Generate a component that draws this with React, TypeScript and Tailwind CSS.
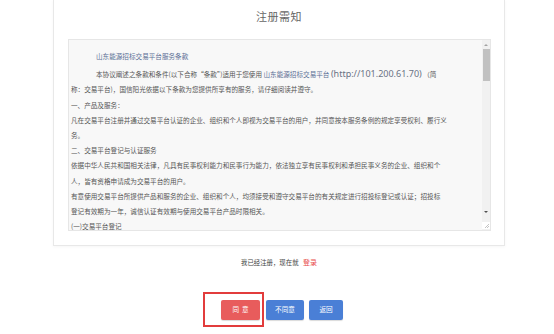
const cjk = { fontFamily: '"Microsoft YaHei", "Noto Sans CJK SC", "Noto Sans", sans-serif' };

const lines: { text: React.ReactNode; indent?: boolean }[] = [
    {
        indent: true,
        text: (
            <>
                本协议阐述之条款和条件(以下合称“条款”)适用于您使用{' '}
                <span className="text-[#5b6f95]">山东能源招标交易平台</span>{' '}
                <span className="text-[9px] text-[#6a7284]" style={{ fontFamily: '"Noto Sans", sans-serif' }}>
                    (http://101.200.61.70)
                </span>{' '}
                （简
            </>
        ),
    },
    { text: '称：交易平台)，国信阳光依据以下条款为您提供所享有的服务，请仔细阅读并遵守。' },
    { text: '一、产品及服务：' },
    { text: '凡在交易平台注册并通过交易平台认证的企业、组织和个人即视为交易平台的用户，并同意按本服务条例的规定享受权利、履行义' },
    { text: '务。' },
    { text: '二、交易平台登记与认证服务' },
    { text: '依据中华人民共和国相关法律，凡具有民事权利能力和民事行为能力，依法独立享有民事权利和承担民事义务的企业、组织和个' },
    { text: '人，皆有资格申请成为交易平台的用户。' },
    { text: '有意使用交易平台所提供产品和服务的企业、组织和个人，均须接受和遵守交易平台的有关规定进行招投标登记或认证；招投标' },
    { text: '登记有效期为一年，诚信认证有效期与使用交易平台产品时限相关。' },
    { text: '(一)交易平台登记' },
];

export default function App() {
    return (
        <div className="min-h-[334px] w-[554px] bg-white overflow-hidden" style={cjk}>
            <div className="ml-[53px] w-[452px] border-x border-b border-[#e8e8e8] bg-white px-[14px] pt-[8px] pb-[14px] shadow-[0_1px_3px_rgba(0,0,0,0.04)]">
                <h1 className="h-[16px] text-center text-[11px] leading-[16px] tracking-[0.5px] text-[#666]">注册需知</h1>

                <div className="mt-[15px] flex h-[192px] w-[423px] border border-[#e6e6e6] bg-[#f8f8f8]">
                    <div className="flex-1 overflow-hidden pl-[2px] pt-[9px] text-[6.6px] leading-[15.2px] text-[#555]">
                        <p className="mb-[2px] whitespace-nowrap pl-[25px] text-[#5b6f95]">山东能源招标交易平台服务条款</p>
                        {lines.map((line, i) => (
                            <p key={i} className={`whitespace-nowrap ${line.indent ? 'pl-[25px]' : ''}`}>
                                {line.text}
                            </p>
                        ))}
                    </div>

                    <div className="flex w-[8px] flex-col items-center bg-[#f1f1f1]">
                        <div className="mt-[4px] h-0 w-0 border-x-[2px] border-b-[2px] border-x-transparent border-b-[#a3a3a3]" />
                        <div className="mt-[3px] h-[32px] w-[7px] bg-[#c1c1c1]" />
                        <div className="flex-1" />
                        <div className="mb-[9px] h-0 w-0 border-x-[2px] border-t-[2px] border-x-transparent border-t-[#505050]" />
                        <svg width="8" height="7" viewBox="0 0 8 7" className="mb-[1px] bg-white">
                            <path d="M7 2 L3 6 M7 4 L5 6" stroke="#b5b5b5" strokeWidth="0.8" />
                        </svg>
                    </div>
                </div>
            </div>

            <p className="mt-[11px] h-[10px] pl-[4px] text-center text-[6.4px] leading-[10px] text-[#444]">
                我已经注册，现在就 <span className="ml-[3px] text-[7px] text-[#e84c4c]">登录</span>
            </p>

            <div className="mt-[33px] flex gap-[5px] pl-[221px] text-[6.6px] text-white">
                <div className="relative">
                    <button className="h-[20px] w-[39px] rounded-[2px] bg-[#e85c5c] shadow-[0_1px_1px_rgba(0,0,0,0.15)]">
                        同&nbsp;&nbsp;意
                    </button>
                    <div className="absolute -left-[18px] -right-[4px] -top-[8px] -bottom-[7px] border-2 border-[#e23c3c]" />
                </div>
                <button className="ml-[1px] h-[20px] w-[38px] rounded-[2px] bg-[#4a7fd6] shadow-[0_1px_1px_rgba(0,0,0,0.15)]">
                    不同意
                </button>
                <button className="h-[20px] w-[34px] rounded-[2px] bg-[#4a7fd6] shadow-[0_1px_1px_rgba(0,0,0,0.15)]">
                    返回
                </button>
            </div>
        </div>
    );
}
